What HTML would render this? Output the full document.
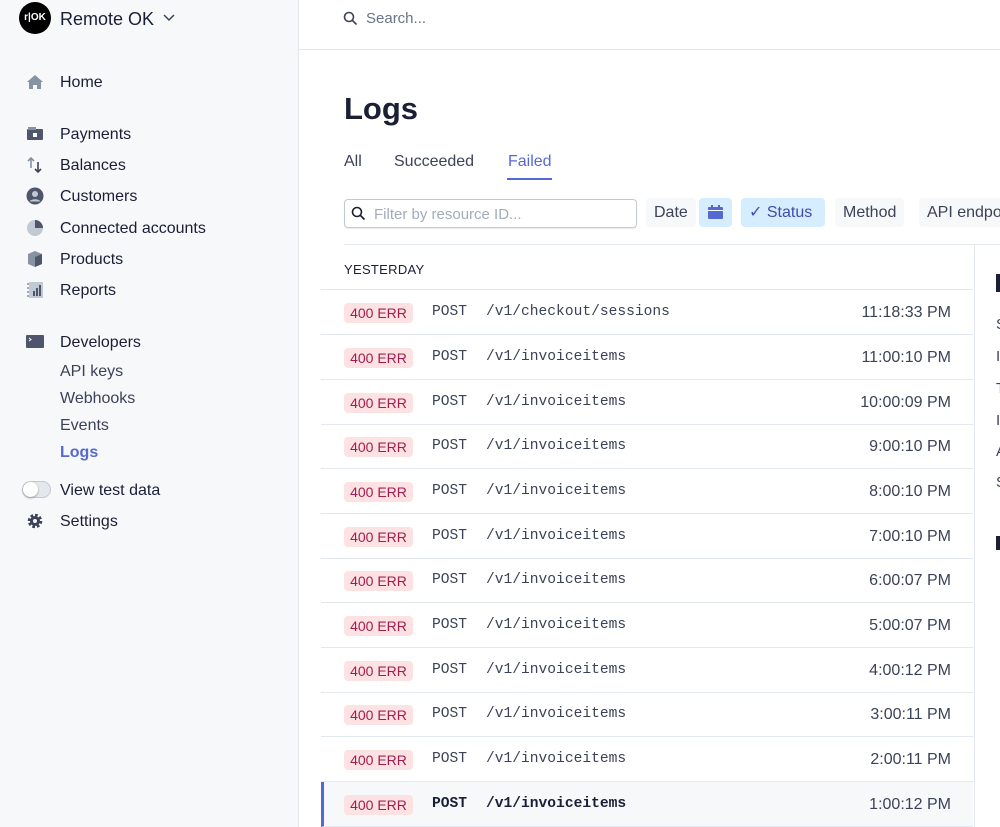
<!DOCTYPE html>
<html><head><meta charset="utf-8"><style>
*{margin:0;padding:0;box-sizing:border-box}
body{width:1000px;height:827px;overflow:hidden;font-family:"Liberation Sans",sans-serif;background:#fff;position:relative;color:#1a1f36}
.sb{position:absolute;left:0;top:0;width:299px;height:827px;background:#f7f8fa;border-right:1px solid #e3e8ee}
.a{position:absolute;font-size:16px;color:#1a1f36;margin-top:1px}
.ic{position:absolute;left:26px;width:18px;height:18px}
.main{position:absolute;left:299px;top:0;right:0;bottom:0}
.mono{font-family:"Liberation Mono",monospace}
.row{position:absolute;left:22px;width:652px;height:45px;border-bottom:1px solid #e3e8ee}
.badge{position:absolute;left:23px;top:13px;width:69px;height:20px;background:#fde2e4;color:#a41c4e;border-radius:4px;font-size:14px;text-align:center;line-height:20px}
.m{position:absolute;left:111px;top:14px;font-size:14.6px;color:#3c4257}
.p{position:absolute;left:165px;top:14px;font-size:14.6px;color:#3c4257}
.t{position:absolute;right:22px;top:14px;font-size:16px;color:#3c4257}
.btn{position:absolute;top:198px;height:29px;border-radius:4px;font-size:16px;line-height:30px;padding:0 8px;background:#f7f8fa;color:#3c4257}
.rp{position:absolute;left:996px;font-size:15px;color:#3c4257}
</style></head><body>
<div class="sb">
 <div style="position:absolute;left:19px;top:2px;width:32px;height:32px;border-radius:50%;background:#000;color:#fff;font-size:10px;font-weight:bold;line-height:32px;text-align:center">r|OK</div>
 <div class="a" style="left:60px;top:8px;font-size:18px">Remote OK</div>
 <svg style="position:absolute;left:163px;top:14px" width="12" height="8"><path d="M1 1l5 5 5-5" stroke="#3c4257" stroke-width="1.5" fill="none"/></svg>
 <svg class="ic" style="top:73px" viewBox="0 0 18 18"><path d="M9 2L1 9h2v7h4v-4h4v4h4V9h2z" fill="#8792a2"/></svg>
 <div class="a" style="left:60px;top:73px">Home</div>
 <svg class="ic" style="top:125px" viewBox="0 0 18 18"><rect x="1" y="4" width="16" height="11" rx="1" fill="#4f566b"/><rect x="2" y="2" width="8" height="3" fill="#8792a2"/><rect x="7" y="8" width="4" height="4" fill="#fff"/></svg>
 <div class="a" style="left:60px;top:125px">Payments</div>
 <svg class="ic" style="top:156px" viewBox="0 0 18 18"><path d="M5 12V2M2 5l3-3 3 3" stroke="#8792a2" stroke-width="1.6" fill="none"/><path d="M12 6v10M9 13l3 3 3-3" stroke="#3c4257" stroke-width="1.6" fill="none"/></svg>
 <div class="a" style="left:60px;top:156px">Balances</div>
 <svg class="ic" style="top:187px" viewBox="0 0 18 18"><circle cx="9" cy="9" r="8.5" fill="#4f566b"/><circle cx="9" cy="7" r="3" fill="#c1c9d2"/><path d="M3.5 14.5c2-3 9-3 11 0" fill="#c1c9d2"/></svg>
 <div class="a" style="left:60px;top:187px">Customers</div>
 <svg class="ic" style="top:219px" viewBox="0 0 18 18"><circle cx="9" cy="9" r="8" fill="#c1c9d2"/><path d="M9 1a8 8 0 0 1 8 8H9z" fill="#4f566b"/></svg>
 <div class="a" style="left:60px;top:219px">Connected accounts</div>
 <svg class="ic" style="top:250px" viewBox="0 0 18 18"><path d="M9 1l7 3v10l-7 3-7-3V4z" fill="#8792a2"/><path d="M9 7l7-3v10l-7 3z" fill="#4f566b"/></svg>
 <div class="a" style="left:60px;top:250px">Products</div>
 <svg class="ic" style="top:281px" viewBox="0 0 18 18"><rect x="3" y="1" width="14" height="16" fill="#c1c9d2"/><rect x="7" y="10" width="2" height="5" fill="#4f566b"/><rect x="10" y="7" width="2" height="8" fill="#4f566b"/><rect x="13" y="4" width="2" height="11" fill="#4f566b"/><path d="M1 3h2M1 7h2M1 11h2M1 15h2" stroke="#4f566b"/></svg>
 <div class="a" style="left:60px;top:281px">Reports</div>
 <svg class="ic" style="top:333px" viewBox="0 0 18 18"><rect x="0" y="2" width="18" height="13" rx="1" fill="#4f566b"/><path d="M3 5l2 1.5L3 8" stroke="#fff" fill="none"/></svg>
 <div class="a" style="left:60px;top:333px">Developers</div>
 <div class="a" style="left:60px;top:362px;color:#3c4257">API keys</div>
 <div class="a" style="left:60px;top:389px;color:#3c4257">Webhooks</div>
 <div class="a" style="left:60px;top:416px;color:#3c4257">Events</div>
 <div class="a" style="left:60px;top:443px;color:#5469d4;font-weight:bold">Logs</div>
 <div style="position:absolute;left:22px;top:481px;width:29px;height:17px;border-radius:9px;background:#e3e8ee;border:1px solid #c1c9d2"><div style="width:15px;height:15px;border-radius:50%;background:#fff;box-shadow:0 1px 2px #999"></div></div>
 <div class="a" style="left:60px;top:481px">View test data</div>
 <svg class="ic" style="top:512px" viewBox="0 0 18 18"><circle cx="9" cy="9" r="5.5" fill="none" stroke="#3c4257" stroke-width="3.5" stroke-dasharray="2.5 1.8"/><circle cx="9" cy="9" r="5" fill="#3c4257"/><circle cx="9" cy="9" r="2" fill="#f7f8fa"/></svg>
 <div class="a" style="left:60px;top:512px">Settings</div>
</div>
<div class="main">
 <div style="position:absolute;left:0;right:0;top:0;height:50px;border-bottom:1px solid #e3e8ee"></div>
 <svg style="position:absolute;left:44px;top:11px" width="15" height="15"><circle cx="6" cy="6" r="4.5" stroke="#3c4257" stroke-width="1.6" fill="none"/><path d="M9.5 9.5l4 4" stroke="#3c4257" stroke-width="1.6"/></svg>
 <div style="position:absolute;left:67px;top:10px;font-size:15px;color:#697386">Search...</div>
 <div style="position:absolute;left:45px;top:91px;font-size:31px;font-weight:bold;color:#1a1f36">Logs</div>
 <div style="position:absolute;left:45px;top:153px;font-size:16px;color:#3c4257">All</div>
 <div style="position:absolute;left:95px;top:153px;font-size:16px;color:#3c4257">Succeeded</div>
 <div style="position:absolute;left:209px;top:153px;font-size:16px;color:#5469d4">Failed</div>
 <div style="position:absolute;left:208px;top:178px;width:45px;height:2px;background:#5469d4"></div>
 <div style="position:absolute;left:45px;top:199px;width:293px;height:29px;border:1px solid #c1c9d2;border-radius:4px;box-shadow:0 1px 1px rgba(0,0,0,.08)"></div>
 <svg style="position:absolute;left:52px;top:206px" width="15" height="15"><circle cx="6" cy="6" r="4.5" stroke="#1a1f36" stroke-width="1.6" fill="none"/><path d="M9.5 9.5l4 4" stroke="#1a1f36" stroke-width="1.6"/></svg>
 <div style="position:absolute;left:75px;top:206px;font-size:15px;color:#a3acb9">Filter by resource ID...</div>
 <div class="btn" style="left:347px">Date</div>
 <div class="btn" style="left:400px;width:33px;background:#d6ecff"><svg style="position:absolute;left:9px;top:7px" width="15" height="14"><rect x="0" y="2" width="15" height="12" rx="1" fill="#5469d4"/><rect x="0" y="5" width="15" height="1" fill="#fff"/><rect x="3" y="0" width="2" height="3" fill="#5469d4"/><rect x="10" y="0" width="2" height="3" fill="#5469d4"/></svg></div>
 <div class="btn" style="left:442px;width:84px;background:#d6ecff;color:#3d4eac">✓ Status</div>
 <div class="btn" style="left:536px">Method</div>
 <div class="btn" style="left:620px;width:100px">API endpo</div>
 <div style="position:absolute;left:45px;top:244px;right:0;height:1px;background:#e3e8ee"></div>
 <div style="position:absolute;left:675px;top:245px;width:1px;bottom:0;background:#e3e8ee"></div>
 <div style="position:absolute;left:45px;top:262px;font-size:13px;color:#1a1f36;letter-spacing:.3px">YESTERDAY</div>
 <div style="position:absolute;left:22px;top:289px;width:652px;height:1px;background:#e3e8ee"></div>
 <div class="row" style="top:290px"><span class="badge">400 ERR</span><span class="m mono">POST</span><span class="p mono">/v1/checkout/sessions</span><span class="t">11:18:33 PM</span></div>
 <div class="row" style="top:335px"><span class="badge">400 ERR</span><span class="m mono">POST</span><span class="p mono">/v1/invoiceitems</span><span class="t">11:00:10 PM</span></div>
 <div class="row" style="top:380px"><span class="badge">400 ERR</span><span class="m mono">POST</span><span class="p mono">/v1/invoiceitems</span><span class="t">10:00:09 PM</span></div>
 <div class="row" style="top:424px"><span class="badge">400 ERR</span><span class="m mono">POST</span><span class="p mono">/v1/invoiceitems</span><span class="t">9:00:10 PM</span></div>
 <div class="row" style="top:469px"><span class="badge">400 ERR</span><span class="m mono">POST</span><span class="p mono">/v1/invoiceitems</span><span class="t">8:00:10 PM</span></div>
 <div class="row" style="top:514px"><span class="badge">400 ERR</span><span class="m mono">POST</span><span class="p mono">/v1/invoiceitems</span><span class="t">7:00:10 PM</span></div>
 <div class="row" style="top:558px"><span class="badge">400 ERR</span><span class="m mono">POST</span><span class="p mono">/v1/invoiceitems</span><span class="t">6:00:07 PM</span></div>
 <div class="row" style="top:603px"><span class="badge">400 ERR</span><span class="m mono">POST</span><span class="p mono">/v1/invoiceitems</span><span class="t">5:00:07 PM</span></div>
 <div class="row" style="top:648px"><span class="badge">400 ERR</span><span class="m mono">POST</span><span class="p mono">/v1/invoiceitems</span><span class="t">4:00:12 PM</span></div>
 <div class="row" style="top:692px"><span class="badge">400 ERR</span><span class="m mono">POST</span><span class="p mono">/v1/invoiceitems</span><span class="t">3:00:11 PM</span></div>
 <div class="row" style="top:737px"><span class="badge">400 ERR</span><span class="m mono">POST</span><span class="p mono">/v1/invoiceitems</span><span class="t">2:00:11 PM</span></div>
 <div class="row" style="top:782px;background:#f7f8fa;border-left:3px solid #5469d4"><span class="badge" style="left:20px">400 ERR</span><span class="m mono" style="left:108px;font-weight:bold;color:#1a1f36">POST</span><span class="p mono" style="left:162px;font-weight:bold;color:#1a1f36">/v1/invoiceitems</span><span class="t">1:00:12 PM</span></div>
</div>
<div style="position:absolute;left:996px;top:274px;width:4px;height:18px;background:#1a1f36"></div>
<div class="rp" style="top:316px">S</div><div class="rp" style="top:348px">I</div><div class="rp" style="top:380px">T</div><div class="rp" style="top:412px">I</div><div class="rp" style="top:443px">A</div><div class="rp" style="top:474px">S</div>
<div style="position:absolute;left:996px;top:536px;width:4px;height:14px;background:#1a1f36"></div>
</body></html>
